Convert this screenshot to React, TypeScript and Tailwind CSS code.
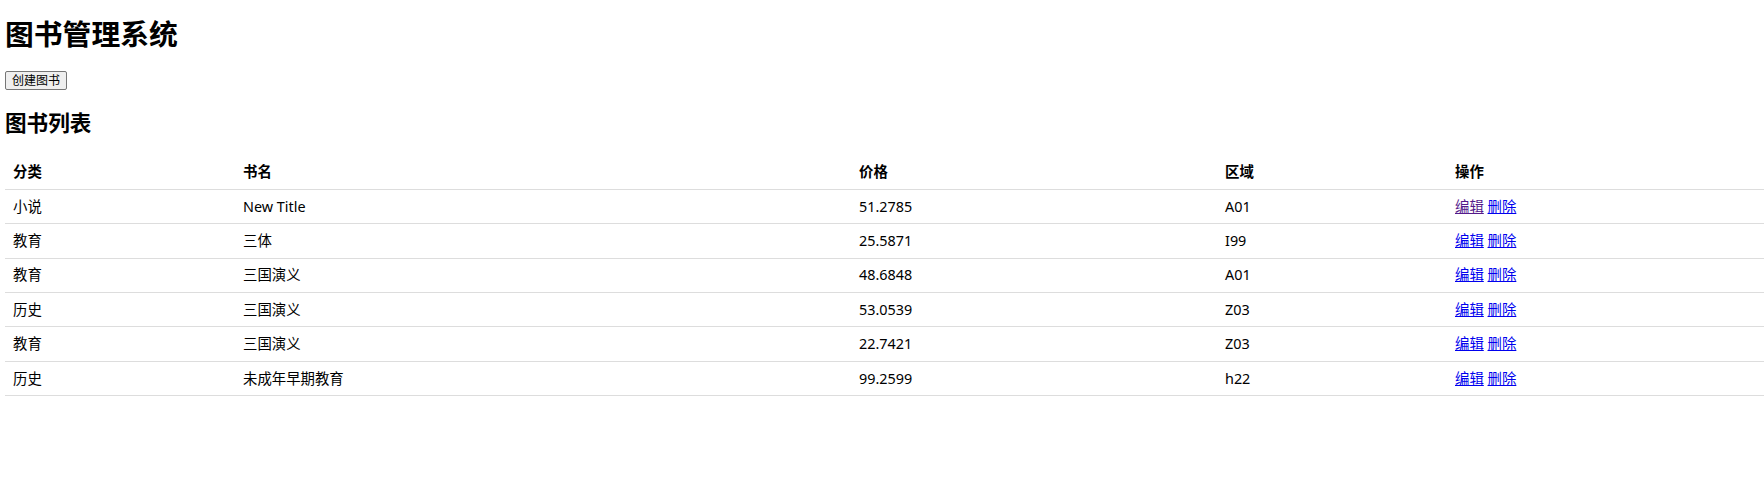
import React from "react";

const rows = [
  { cat: "小说", name: "New Title", price: "51.2785", area: "A01" },
  { cat: "教育", name: "三体", price: "25.5871", area: "I99" },
  { cat: "教育", name: "三国演义", price: "48.6848", area: "A01" },
  { cat: "历史", name: "三国演义", price: "53.0539", area: "Z03" },
  { cat: "教育", name: "三国演义", price: "22.7421", area: "Z03" },
  { cat: "历史", name: "未成年早期教育", price: "99.2599", area: "h22" },
];

export default function App() {
  return (
    <div className="bg-white text-black pl-[5px] min-h-[504px] font-['Noto_Sans','Noto_Sans_CJK_SC',sans-serif] text-[14.4px]">
      <h1 className="pt-[14px] text-[28.8px] leading-[40px] font-bold">图书管理系统</h1>
      <div className="mt-[17px] flex">
        <button className="h-[19px] px-[6px] border border-[#767676] bg-[#efefef] text-[12px] leading-[15px] rounded-[2px]">
          创建图书
        </button>
      </div>
      <h2 className="mt-[18px] text-[21.6px] leading-[30px] font-bold">图书列表</h2>
      <table className="mt-[17px] w-[1759px] table-fixed border-collapse text-left">
        <colgroup>
          <col className="w-[230px]" />
          <col className="w-[616px]" />
          <col className="w-[366px]" />
          <col className="w-[230px]" />
          <col className="w-[317px]" />
        </colgroup>
        <thead>
          <tr>
            {["分类", "书名", "价格", "区域", "操作"].map((h) => (
              <th key={h} className="h-[34.4px] px-2 py-0 border-b border-[#dddddd] font-bold text-[14.4px] leading-[20px] align-middle">
                {h}
              </th>
            ))}
          </tr>
        </thead>
        <tbody>
          {rows.map((r, i) => (
            <tr key={i}>
              <td className="h-[34.4px] px-2 py-0 border-b border-[#dddddd] leading-[20px] align-middle">{r.cat}</td>
              <td className="h-[34.4px] px-2 py-0 border-b border-[#dddddd] leading-[20px] align-middle">{r.name}</td>
              <td className="h-[34.4px] px-2 py-0 border-b border-[#dddddd] leading-[20px] align-middle">{r.price}</td>
              <td className="h-[34.4px] px-2 py-0 border-b border-[#dddddd] leading-[20px] align-middle">{r.area}</td>
              <td className="h-[34.4px] px-2 py-0 border-b border-[#dddddd] leading-[20px] align-middle">
                <a href="#" className={i === 0 ? "underline text-[#551a8b]" : "underline text-[#0000ee]"}>
                  编辑
                </a>{" "}
                <a href="#" className="underline text-[#0000ee]">
                  删除
                </a>
              </td>
            </tr>
          ))}
        </tbody>
      </table>
    </div>
  );
}
